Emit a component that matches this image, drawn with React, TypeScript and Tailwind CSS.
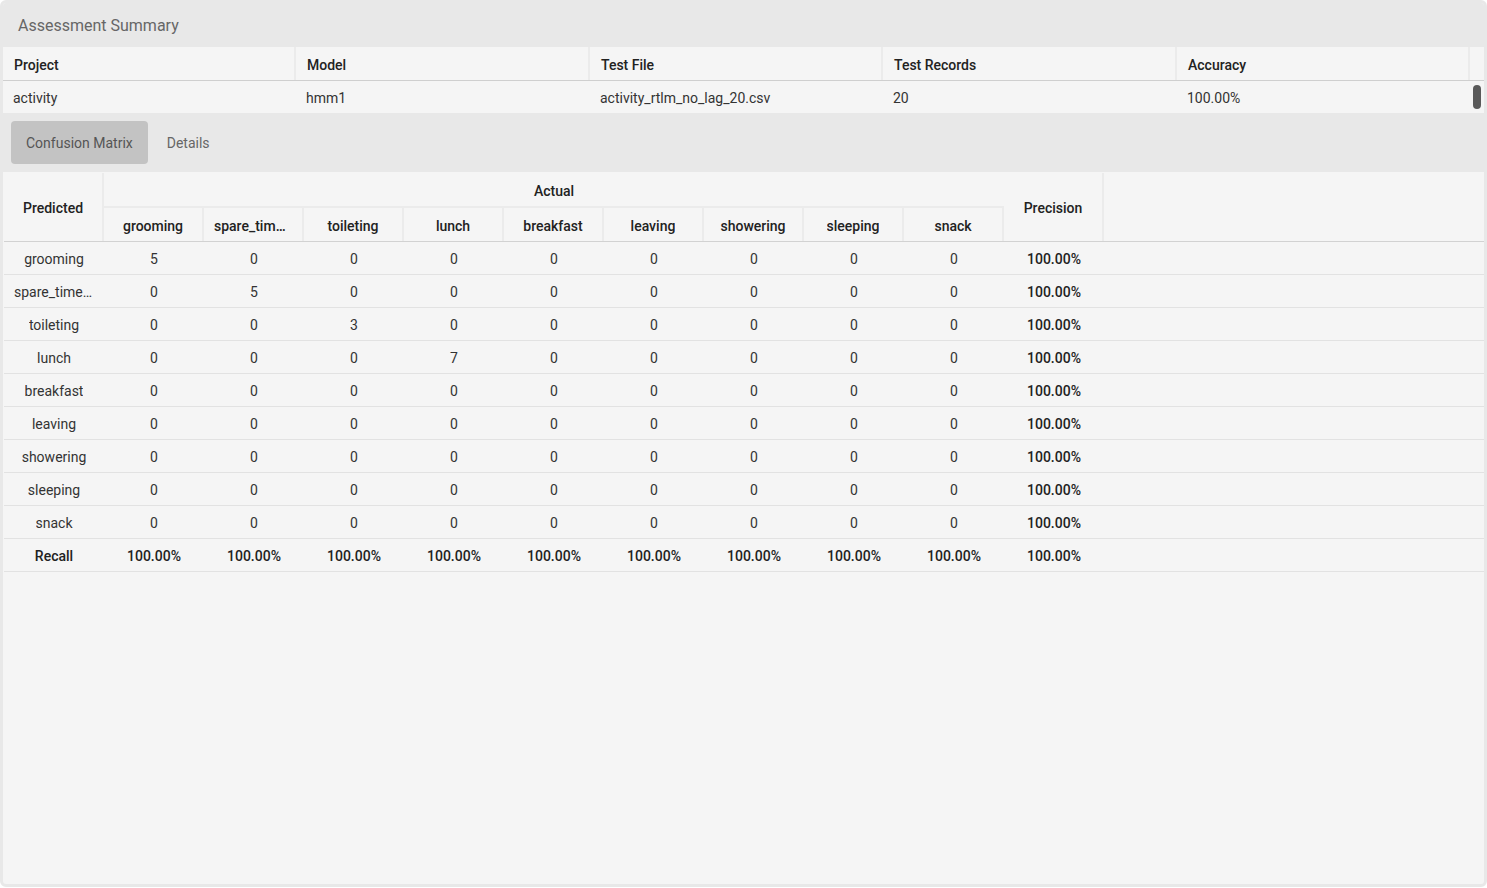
import React, { useState } from 'react';

const classes = ['grooming', 'spare_time/tv', 'toileting', 'lunch', 'breakfast', 'leaving', 'showering', 'sleeping', 'snack'];
const diagonal = [5, 5, 3, 7, 0, 0, 0, 0, 0];

const summaryCols = ['Project', 'Model', 'Test File', 'Test Records', 'Accuracy'];
const summaryRow = ['activity', 'hmm1', 'activity_rtlm_no_lag_20.csv', '20', '100.00%'];

export default function App() {
  const [tab, setTab] = useState('matrix');

  return (
    <div className="h-[888px] w-full bg-white pb-[1px]" style={{ fontFamily: 'Roboto, "Noto Sans", Arial, sans-serif' }}>
      <div className="h-full rounded-[6px] border-[3px] border-[#e8e8e8] bg-[#f5f5f5] overflow-hidden flex flex-col">
        {/* Summary header */}
        <div className="h-[44px] shrink-0 bg-[#e8e8e8] flex items-center pt-[2px] px-[15px] text-[16px] text-[#666]">
          Assessment Summary
        </div>

        {/* Summary table */}
        <div className="grid grid-cols-[293px_294px_293px_294px_293px_1fr] text-[14px] border-b border-[#cfcfcf] h-[34px] items-stretch">
          {summaryCols.map((c) => (
            <div key={c} className="border-r-2 border-[#ebebeb] px-[11px] pt-[3px] flex items-center font-medium text-[#222]">
              {c}
            </div>
          ))}
          <div />
        </div>
        <div className="grid grid-cols-[293px_294px_293px_294px_293px_1fr] text-[14px] text-[#333] h-[32px] items-stretch">
          {summaryRow.map((c, i) => (
            <div key={i} className="px-[10px] pt-[3px] flex items-center">
              {c}
            </div>
          ))}
          <div className="flex items-center justify-center">
            <div className="w-[8px] h-[24px] rounded-full bg-[#5a5a5a]" />
          </div>
        </div>

        {/* Tabs */}
        <div className="h-[59px] shrink-0 bg-[#e8e8e8] flex items-start gap-[4px] pt-[8px] pl-[8px]">
          <button
            onClick={() => setTab('matrix')}
            className={`h-[43px] px-[15px] pt-[2px] rounded-[4px] text-[14px] ${tab === 'matrix' ? 'bg-[#c3c3c3] text-[#555]' : 'text-[#666]'}`}
          >
            Confusion Matrix
          </button>
          <button
            onClick={() => setTab('details')}
            className={`h-[43px] px-[15px] pt-[2px] rounded-[4px] text-[14px] ${tab === 'details' ? 'bg-[#c3c3c3] text-[#555]' : 'text-[#666]'}`}
          >
            Details
          </button>
        </div>

        {/* Confusion matrix */}
        <div className="mt-[1px] pl-[1px] text-[14px] text-[#333]">
          <div className="flex border-b border-[#d2d2d2]">
            <div className="w-[100px] h-[68px] pt-[3px] border-r-2 border-[#ebebeb] flex items-center justify-center text-[14px] font-medium text-[#222]">
              Predicted
            </div>
            <div className="w-[900px] flex flex-col">
              <div className="h-[35px] pt-[4px] border-b-2 border-[#ebebeb] flex items-center justify-center text-[14px] font-medium text-[#222]">
                Actual
              </div>
              <div className="flex h-[33px]">
                {classes.map((c) => (
                  <div key={c} className="w-[100px] border-r-2 border-[#ebebeb] flex items-center justify-center text-[14px] font-medium text-[#222] px-[10px] pt-[3px] min-w-0">
                    <span className="truncate">{c}</span>
                  </div>
                ))}
              </div>
            </div>
            <div className="w-[100px] h-[68px] pt-[3px] border-r-2 border-[#ebebeb] flex items-center justify-center text-[14px] font-medium text-[#222]">
              Precision
            </div>
          </div>

          {classes.map((c, r) => (
            <div key={c} className="flex h-[33px] pt-[3px] border-b border-[#e2e2e2]">
              <div className="w-[100px] flex items-center justify-center px-[10px] min-w-0">
                <span className="truncate">{c}</span>
              </div>
              {classes.map((_, k) => (
                <div key={k} className="w-[100px] flex items-center justify-center">
                  {r === k ? diagonal[r] : 0}
                </div>
              ))}
              <div className="w-[100px] flex items-center justify-center font-medium text-[#222]">100.00%</div>
            </div>
          ))}

          <div className="flex h-[33px] pt-[3px] border-b border-[#e2e2e2] font-medium text-[#222]">
            <div className="w-[100px] flex items-center justify-center">Recall</div>
            {classes.map((_, k) => (
              <div key={k} className="w-[100px] flex items-center justify-center">100.00%</div>
            ))}
            <div className="w-[100px] flex items-center justify-center">100.00%</div>
          </div>
        </div>
      </div>
    </div>
  );
}
